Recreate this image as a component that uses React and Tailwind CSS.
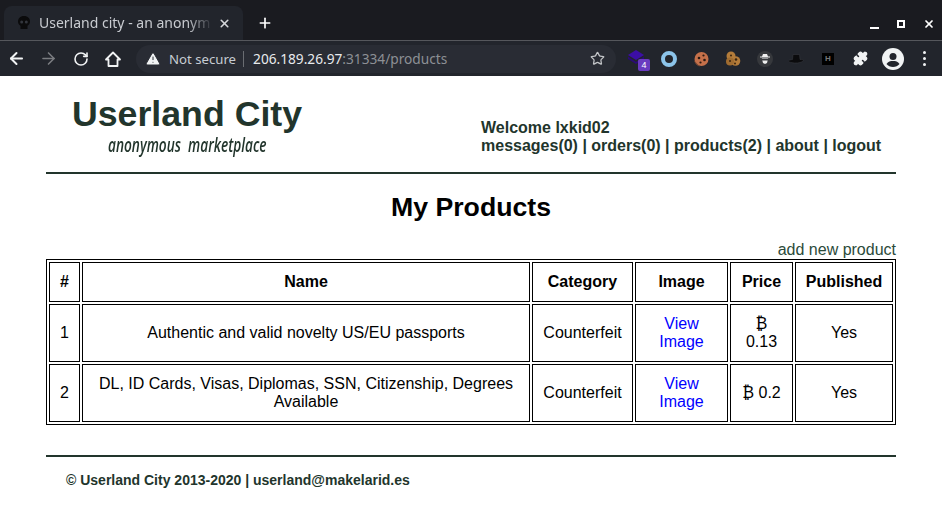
import React from 'react';
import { ArrowLeft, ArrowRight, RotateCw, Star, X, Plus, Puzzle, TriangleAlert } from 'lucide-react';

const Skull = () => (
  <svg width="16" height="16" viewBox="0 0 16 16">
    <path d="M8 1C4 1 2 3.500 2 6.500c0 2 1 3.500 2.500 4.300V14h7v-3.200C13 10 14 8.500 14 6.500 14 3.500 12 1 8 1z" fill="#0b0b0c" />
    <circle cx="5.700" cy="7" r="1.500" fill="#33363d" />
    <circle cx="10.300" cy="7" r="1.500" fill="#33363d" />
  </svg>
);

const Home = () => (
  <svg width="18" height="18" viewBox="0 0 18 18" fill="none" stroke="#f1f3f4" strokeWidth="1.800">
    <path d="M9 2.500 2 9.500h2.500V16h9V9.500H16z" strokeLinejoin="round" />
  </svg>
);

const CookieOne = () => (
  <svg width="16" height="16" viewBox="0 0 16 16">
    <circle cx="8.500" cy="8" r="7" fill="#c4704a" />
    <path d="M1 9c.5 3 3 6 6 6.500C4 13 2.500 11 1 9z" fill="#7d4a35" />
    <circle cx="6" cy="7" r="1.300" fill="#2b1a12" />
    <circle cx="10.500" cy="4.500" r="1.100" fill="#2b1a12" />
    <circle cx="11.500" cy="9" r="1.300" fill="#2b1a12" />
    <circle cx="7.500" cy="11.500" r="1.100" fill="#2b1a12" />
  </svg>
);

const CookieTwo = () => (
  <svg width="16" height="16" viewBox="0 0 16 16">
    <circle cx="6" cy="5" r="4.500" fill="#b47c3a" />
    <circle cx="10.500" cy="10" r="4.800" fill="#b47c3a" />
    <circle cx="5" cy="10.500" r="4" fill="#a06c30" />
    <circle cx="6" cy="4.500" r="1" fill="#3a2510" />
    <circle cx="11" cy="8.500" r="1.300" fill="#3a2510" />
    <circle cx="5" cy="10" r="1" fill="#3a2510" />
    <circle cx="10" cy="12.500" r="1" fill="#3a2510" />
  </svg>
);

const Browser = () => (
  <div className="bg-[#1a1b20] text-[#e8eaed]">
    <div className="flex h-[40px] items-end pl-[4px]">
      <div className="flex h-[34px] w-[239px] items-center rounded-t-lg bg-[#22252c] pl-[12px] pr-[7px]">
        <Skull />
        <span className="ml-[7px] w-[174px] overflow-hidden whitespace-nowrap text-[14px] text-[#c9ccd1] [font-family:'Noto_Sans',sans-serif] [mask-image:linear-gradient(to_right,black_85%,transparent)]">
          Userland city - an anonym
        </span>
        <X size={13} strokeWidth={3} className="ml-[5px] text-[#d5d7da]" />
      </div>
      <div className="mb-[9px] ml-[14px]">
        <Plus size={16} strokeWidth={2.500} className="text-white" />
      </div>
      <div className="mb-[10px] ml-auto flex items-center gap-[18px] pr-[7px]">
        <div className="mt-[7px] h-[2px] w-[9px] bg-white" />
        <div className="h-[8px] w-[8px] border-2 border-white" />
        <X size={12} strokeWidth={3.500} className="text-white" />
      </div>
    </div>
    <div className="flex h-[36px] items-center border-t border-[#55575c] bg-[#22252c] pl-[7px]">
      <ArrowLeft size={19} strokeWidth={2.500} className="text-[#f1f3f4]" />
      <ArrowRight size={19} strokeWidth={2} className="ml-[13px] text-[#7a7c80]" />
      <RotateCw size={16} strokeWidth={2.400} className="ml-[15px] text-[#f1f3f4]" />
      <div className="ml-[15px]"><Home /></div>
      <div className="ml-[14px] flex h-[28px] w-[480px] items-center rounded-full bg-[#292c34] pl-[9px] text-[13.700px] [font-family:'Noto_Sans',sans-serif]">
        <TriangleAlert size={16} fill="#f1f3f4" stroke="#292c34" strokeWidth={1.500} />
        <span className="ml-[8px] text-[13.200px] text-[#c7ccd3]">Not secure</span>
        <span className="mx-[7px] h-[16px] w-px bg-[#6a6d72]" />
        <span className="ml-[2px] whitespace-nowrap text-[#e8eaed]">206.189.26.97<span className="text-[#8d9095]">:31334/products</span></span>
        <Star size={15} strokeWidth={2} className="ml-auto mr-[11px] text-[#c4c6c9]" />
      </div>
      <div className="ml-[12px] flex items-center">
        <div className="relative h-[18px] w-[16px]">
          <svg width="16" height="14" viewBox="0 0 16 14"><path d="M8 0 16 5 8 10 0 5z" fill="#3c0ea5" /><path d="M0 6.500 8 12l8-5.500V9l-8 5-8-5z" fill="#2b0a78" /></svg>
          <span className="absolute left-[10px] top-[9px] flex h-[12px] w-[12px] items-center justify-center rounded-[2px] bg-[#6a3bc0] text-[9px] text-white">4</span>
        </div>
        <div className="ml-[17px] h-[16px] w-[16px] rounded-full border-[4px] border-[#8cc4ea]" />
        <div className="ml-[16px]"><CookieOne /></div>
        <div className="ml-[16px]"><CookieTwo /></div>
        <svg className="ml-[16px]" width="16" height="16" viewBox="0 0 16 16">
          <circle cx="8" cy="8" r="8" fill="#36383c" />
          <path d="M5 5.500 6 3h4l1 2.500h2V6.500H3v-1z" fill="#eee" />
          <path d="M4.800 7.500h6.400L10 12l-2 1-2-1z" fill="#eee" />
          <rect x="5" y="8" width="6" height="1.500" fill="#36383c" />
        </svg>
        <svg className="ml-[15px]" width="16" height="12" viewBox="0 0 16 12">
          <path d="M5 1.500h6.500l.5 5c2.500 0 3.500 .500 3.500 1s-3 2.500-7.500 2.500S.5 9 .5 8 3 6.700 4.500 6.500z" fill="#0b0b0d" stroke="#3a3c42" strokeWidth=".500" />
        </svg>
        <div className="ml-[18px] flex h-[12px] w-[12px] items-center justify-center bg-black text-[8px] font-bold text-[#777]">H</div>
        <Puzzle size={15} fill="#f1f3f4" stroke="#f1f3f4" className="ml-[19px]" />
        <svg className="ml-[14px]" width="22" height="22" viewBox="0 0 22 22">
          <circle cx="11" cy="11" r="11" fill="#f1f3f4" />
          <circle cx="11" cy="8.500" r="3.500" fill="#22252c" />
          <path d="M4.500 16c1.500-2.500 4-3 6.500-3s5 .500 6.500 3c-1.500 2-4 3-6.500 3s-5-1-6.500-3z" fill="#22252c" />
        </svg>
        <div className="ml-[19px] flex flex-col gap-[3px]">
          <span className="h-[3px] w-[3px] rounded-full bg-[#f1f3f4]" />
          <span className="h-[3px] w-[3px] rounded-full bg-[#f1f3f4]" />
          <span className="h-[3px] w-[3px] rounded-full bg-[#f1f3f4]" />
        </div>
      </div>
    </div>
  </div>
);

const cell = 'border border-black p-0 text-center align-middle';

const products = [
  { id: 1, name: 'Authentic and valid novelty US/EU passports', price: '0.13' },
  { id: 2, name: 'DL, ID Cards, Visas, Diplomas, SSN, Citizenship, Degrees Available', price: '0.2' },
];

const App = () => (
  <div className="h-[525px] overflow-hidden bg-white text-[16px] leading-[18px] text-black [font-family:'Liberation_Sans',sans-serif]">
    <Browser />
    <div className="mx-[46px] w-[850px]">
      <div className="flex h-[98px] items-start border-b-2 border-[#22352c] text-[#22352c]">
        <div className="ml-[26px] w-[409px] pt-[18px]">
          <div className="text-[35.700px] font-bold leading-[41px]">Userland City</div>
          <div className="ml-[36px] origin-left scale-x-[0.72] whitespace-nowrap text-[19px] font-semibold italic leading-[20px] [font-family:'Open_Sans',sans-serif] [word-spacing:5px]">
            anonymous marketplace
          </div>
        </div>
        <div className="pt-[43px] font-bold">
          <div>Welcome lxkid02</div>
          <div>messages(0) | orders(0) | products(2) | about | logout</div>
        </div>
      </div>
      <h1 className="mt-[18px] text-center text-[26.670px] font-bold leading-[30px]">My Products</h1>
      <div className="mt-[19px] text-right text-[#2b4a3a]">add new product</div>
      <table className="w-[850px] table-fixed border-separate border-spacing-[2px] border border-black">
        <thead>
          <tr className="h-[40px]">
            <th className={`${cell} w-[31px]`}>#</th>
            <th className={`${cell} w-[448px]`}>Name</th>
            <th className={`${cell} w-[101px]`}>Category</th>
            <th className={`${cell} w-[93px]`}>Image</th>
            <th className={`${cell} w-[63px]`}>Price</th>
            <th className={`${cell} w-[98px]`}>Published</th>
          </tr>
        </thead>
        <tbody>
          {products.map((p) => (
            <tr key={p.id} className="h-[58px]">
              <td className={cell}>{p.id}</td>
              <td className={`${cell} px-[10px]`}>{p.name}</td>
              <td className={cell}>Counterfeit</td>
              <td className={`${cell} px-[20px] text-[#0000ff]`}>View Image</td>
              <td className={`${cell} px-[10px]`}>₿ {p.price}</td>
              <td className={cell}>Yes</td>
            </tr>
          ))}
        </tbody>
      </table>
      <div className="mt-[30px] border-t-2 border-[#22352c] pl-[20px] pt-[15px] text-[14px] font-bold leading-[16px] text-[#22352c]">
        © Userland City 2013-2020 | userland@makelarid.es
      </div>
    </div>
  </div>
);

export default App;
